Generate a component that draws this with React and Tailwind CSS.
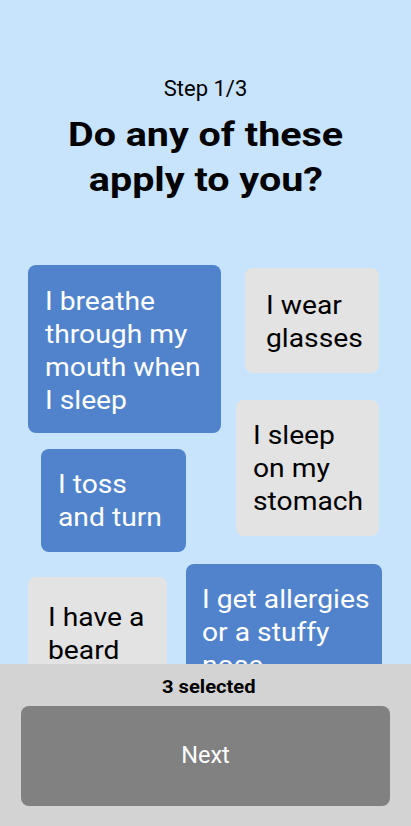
import React from "react";

const cards = [
  { lines: ["I breathe", "through my", "mouth when", "I sleep"], sel: true, cls: "left-[28px] top-[15px] w-[193px] h-[168px] pl-[17px] pt-[20px]" },
  { lines: ["I wear", "glasses"], sel: false, cls: "left-[245px] top-[18px] w-[134px] h-[105px] pl-[21px] pt-[21px]" },
  { lines: ["I sleep", "on my", "stomach"], sel: false, cls: "left-[236px] top-[150px] w-[143px] h-[136px] pl-[17px] pt-[19px]" },
  { lines: ["I toss", "and turn"], sel: true, cls: "left-[41px] top-[199px] w-[145px] h-[103px] pl-[17px] pt-[19px]" },
  { lines: ["I have a", "beard"], sel: false, cls: "left-[28px] top-[327px] w-[139px] h-[110px] pl-[20px] pt-[24px]" },
  { lines: ["I get allergies", "or a stuffy", "nose"], sel: true, cls: "left-[186px] top-[314px] w-[196px] h-[140px] pl-[16px] pt-[19px]" },
];

export default function App() {
  return (
    <div className="h-[826px] w-full bg-[#c8e4fd] flex flex-col overflow-hidden font-['Roboto',sans-serif]">
      <div className="flex-1 min-h-0 overflow-hidden">
        <p className="pt-[75px] text-center text-[22px] leading-[28px] text-black">Step 1/3</p>
        <h1 className="mt-[9px] flex flex-col items-center text-[34px] leading-[45px] font-bold text-black">
          <span className="inline-block scale-x-[1.16]">Do any of these</span>
          <span className="inline-block scale-x-[1.16]">apply to you?</span>
        </h1>
        <div className="relative mt-[48px] h-[500px]">
          {cards.map((c) => (
            <div
              key={c.lines.join(" ")}
              className={
                "absolute rounded-lg text-[25px] leading-[33px] whitespace-nowrap " +
                (c.sel ? "bg-[#5083cb] text-white " : "bg-[#e3e3e3] text-black ") +
                c.cls
              }
            >
              {c.lines.map((l) => (
                <div key={l}>
                  <span className="inline-block origin-left scale-x-[1.13]">{l}</span>
                </div>
              ))}
            </div>
          ))}
        </div>
      </div>
      <div className="h-[162px] shrink-0 bg-[#d3d3d3] flex flex-col items-center px-[21px] pt-[11px]">
        <p className="pl-[6px] text-[18px] leading-[24px] font-bold text-black">
          <span className="inline-block scale-x-[1.12]">3 selected</span>
        </p>
        <button className="mt-[7px] w-full h-[100px] rounded-lg bg-[#818181] text-white text-[23.5px]">
          Next
        </button>
      </div>
    </div>
  );
}
